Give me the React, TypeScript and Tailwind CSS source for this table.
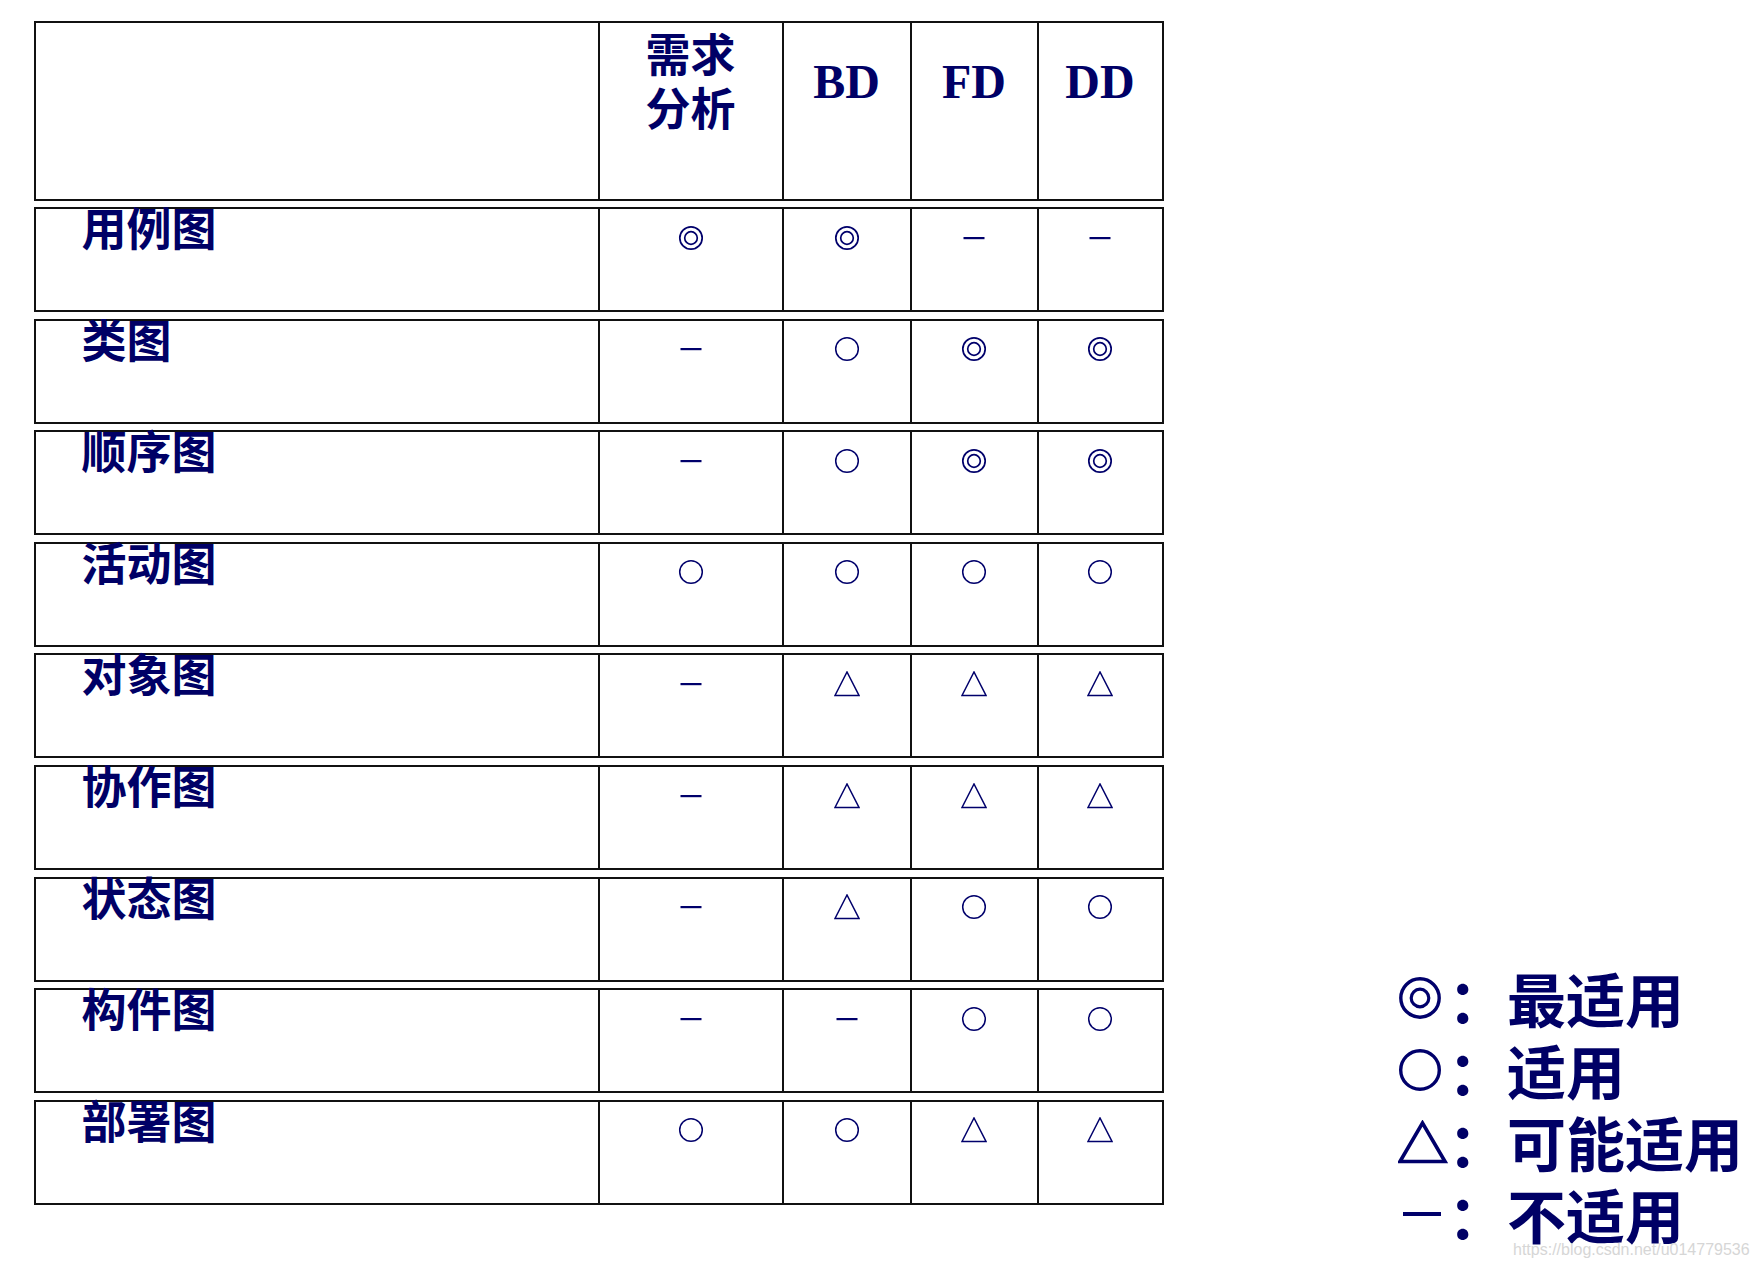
import React from "react";

const C = "#00006b";

type S = "dd" | "o" | "t" | "-";

function Sym({ t }: { t: S }) {
  if (t === "dd")
    return (
      <svg width="26" height="26" viewBox="0 0 26 26">
        <circle cx="13" cy="13" r="11.2" fill="none" stroke={C} strokeWidth="1.7" />
        <circle cx="13" cy="13" r="6.3" fill="none" stroke={C} strokeWidth="1.7" />
      </svg>
    );
  if (t === "o")
    return (
      <svg width="26" height="26" viewBox="0 0 26 26">
        <circle cx="13" cy="13" r="11.3" fill="none" stroke={C} strokeWidth="1.5" />
      </svg>
    );
  if (t === "t")
    return (
      <svg width="26" height="26" viewBox="0 0 26 26">
        <polygon points="1,24.5 13,1 25,24.5" fill="none" stroke={C} strokeWidth="1.5" strokeLinejoin="miter" />
      </svg>
    );
  return (
    <svg width="26" height="26" viewBox="0 0 26 26">
      <rect x="2.5" y="12" width="21" height="2.2" fill={C} />
    </svg>
  );
}

function LegendSym({ t }: { t: S }) {
  if (t === "dd")
    return (
      <svg width="46" height="46" viewBox="0 0 46 46">
        <circle cx="22" cy="23" r="19.2" fill="none" stroke={C} strokeWidth="3.4" />
        <circle cx="22" cy="23" r="8.8" fill="none" stroke={C} strokeWidth="3.2" />
      </svg>
    );
  if (t === "o")
    return (
      <svg width="46" height="46" viewBox="0 0 46 46">
        <circle cx="22" cy="23" r="19.3" fill="none" stroke={C} strokeWidth="3.4" />
      </svg>
    );
  if (t === "t")
    return (
      <svg width="50" height="44" viewBox="0 0 50 44">
        <polygon points="2,41.5 24.5,3 47,41.5" fill="none" stroke={C} strokeWidth="3.6" />
      </svg>
    );
  return (
    <svg width="46" height="46" viewBox="0 0 46 46">
      <rect x="5" y="21" width="38" height="4" fill={C} />
    </svg>
  );
}

const rows: { label: string; v: S[] }[] = [
  { label: "用例图", v: ["dd", "dd", "-", "-"] },
  { label: "类图", v: ["-", "o", "dd", "dd"] },
  { label: "顺序图", v: ["-", "o", "dd", "dd"] },
  { label: "活动图", v: ["o", "o", "o", "o"] },
  { label: "对象图", v: ["-", "t", "t", "t"] },
  { label: "协作图", v: ["-", "t", "t", "t"] },
  { label: "状态图", v: ["-", "t", "o", "o"] },
  { label: "构件图", v: ["-", "-", "o", "o"] },
  { label: "部署图", v: ["o", "o", "t", "t"] },
];

const grid = "grid grid-cols-[562px_184px_128px_127px_125px] border-2 border-[#111]";
const cjk = "font-['Noto_Sans_CJK_SC',sans-serif]";

export default function App() {
  return (
    <div className="relative w-[1757px] h-[1268px] bg-white overflow-hidden flex">
      <div className="ml-[33.5px] mt-[21px] flex flex-col gap-[6.6px]">
        <div className={`${grid} h-[179.5px]`}>
          <div />
          <div className={`border-l-2 border-[#111] flex justify-center pt-[3px] ${cjk} font-bold text-[45px] leading-[54px] text-[#000066]`}>
            <div className="text-center">
              需求
              <br />
              分析
            </div>
          </div>
          {["BD", "FD", "DD"].map((h) => (
            <div
              key={h}
              className="border-l-2 border-[#111] flex justify-center pt-[35px] font-['Liberation_Serif',serif] font-bold text-[48px] leading-[48px] text-[#000066]"
            >
              {h}
            </div>
          ))}
        </div>
        {rows.map((r) => (
          <div key={r.label} className={`${grid} h-[105px]`}>
            <div className={`pl-[46px] -mt-[5px] ${cjk} font-bold text-[45px] leading-[45px] text-[#000066]`}>{r.label}</div>
            {r.v.map((s, i) => (
              <div key={i} className="border-l-2 border-[#111] flex justify-center pt-[15.5px]">
                <div className="h-[26px]">
                  <Sym t={s} />
                </div>
              </div>
            ))}
          </div>
        ))}
      </div>
      <div className={`ml-[233.5px] mt-[962px] flex flex-col ${cjk} font-bold text-[59px] leading-[72px] text-[#000066]`}>
        {([
          ["dd", "最适用"],
          ["o", "适用"],
          ["t", "可能适用"],
          ["-", "不适用"],
        ] as [S, string][]).map(([s, txt]) => (
          <div key={txt} className="flex items-center h-[72px]">
            <div className="w-[51px] pl-[1px] flex items-center">
              <LegendSym t={s} />
            </div>
            <span className="whitespace-nowrap">：{txt}</span>
          </div>
        ))}
      </div>
      <div className="absolute left-[1513px] top-[1240px] font-['Liberation_Sans',sans-serif] text-[16px] leading-[20px] text-[#d6d6d6]">
        https://blog.csdn.net/u014779536
      </div>
    </div>
  );
}
